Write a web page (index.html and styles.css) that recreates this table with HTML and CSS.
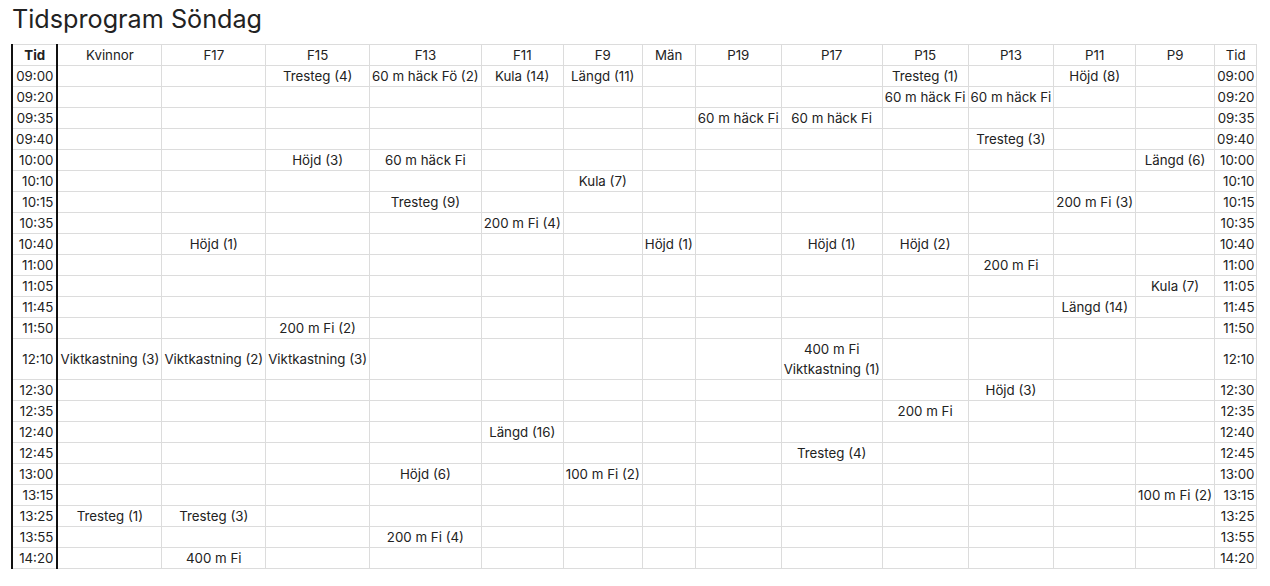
FILE: index.html
```html
<!DOCTYPE html>
<html lang="sv">
<head>
<meta charset="utf-8">
<title>Tidsprogram Söndag</title>
<link rel="stylesheet" href="styles.css">
</head>
<body>
<h1 class="title">Tidsprogram Söndag</h1>
<table class="schedule">
<thead>
<tr><th class="time-head">Tid</th><th>Kvinnor</th><th>F17</th><th>F15</th><th>F13</th><th>F11</th><th>F9</th><th>Män</th><th>P19</th><th>P17</th><th>P15</th><th>P13</th><th>P11</th><th>P9</th><th class="end-head">Tid</th></tr>
</thead>
<tbody>
<tr><td class="time">09:00</td><td></td><td></td><td>Tresteg (4)</td><td>60 m häck Fö (2)</td><td>Kula (14)</td><td>Längd (11)</td><td></td><td></td><td></td><td>Tresteg (1)</td><td></td><td>Höjd (8)</td><td></td><td class="end">09:00</td></tr>
<tr><td class="time">09:20</td><td></td><td></td><td></td><td></td><td></td><td></td><td></td><td></td><td></td><td>60 m häck Fi</td><td>60 m häck Fi</td><td></td><td></td><td class="end">09:20</td></tr>
<tr><td class="time">09:35</td><td></td><td></td><td></td><td></td><td></td><td></td><td></td><td>60 m häck Fi</td><td>60 m häck Fi</td><td></td><td></td><td></td><td></td><td class="end">09:35</td></tr>
<tr><td class="time">09:40</td><td></td><td></td><td></td><td></td><td></td><td></td><td></td><td></td><td></td><td></td><td>Tresteg (3)</td><td></td><td></td><td class="end">09:40</td></tr>
<tr><td class="time">10:00</td><td></td><td></td><td>Höjd (3)</td><td>60 m häck Fi</td><td></td><td></td><td></td><td></td><td></td><td></td><td></td><td></td><td>Längd (6)</td><td class="end">10:00</td></tr>
<tr><td class="time">10:10</td><td></td><td></td><td></td><td></td><td></td><td>Kula (7)</td><td></td><td></td><td></td><td></td><td></td><td></td><td></td><td class="end">10:10</td></tr>
<tr><td class="time">10:15</td><td></td><td></td><td></td><td>Tresteg (9)</td><td></td><td></td><td></td><td></td><td></td><td></td><td></td><td>200 m Fi (3)</td><td></td><td class="end">10:15</td></tr>
<tr><td class="time">10:35</td><td></td><td></td><td></td><td></td><td>200 m Fi (4)</td><td></td><td></td><td></td><td></td><td></td><td></td><td></td><td></td><td class="end">10:35</td></tr>
<tr><td class="time">10:40</td><td></td><td>Höjd (1)</td><td></td><td></td><td></td><td></td><td>Höjd (1)</td><td></td><td>Höjd (1)</td><td>Höjd (2)</td><td></td><td></td><td></td><td class="end">10:40</td></tr>
<tr><td class="time">11:00</td><td></td><td></td><td></td><td></td><td></td><td></td><td></td><td></td><td></td><td></td><td>200 m Fi</td><td></td><td></td><td class="end">11:00</td></tr>
<tr><td class="time">11:05</td><td></td><td></td><td></td><td></td><td></td><td></td><td></td><td></td><td></td><td></td><td></td><td></td><td>Kula (7)</td><td class="end">11:05</td></tr>
<tr><td class="time">11:45</td><td></td><td></td><td></td><td></td><td></td><td></td><td></td><td></td><td></td><td></td><td></td><td>Längd (14)</td><td></td><td class="end">11:45</td></tr>
<tr><td class="time">11:50</td><td></td><td></td><td>200 m Fi (2)</td><td></td><td></td><td></td><td></td><td></td><td></td><td></td><td></td><td></td><td></td><td class="end">11:50</td></tr>
<tr><td class="time">12:10</td><td>Viktkastning (3)</td><td>Viktkastning (2)</td><td>Viktkastning (3)</td><td></td><td></td><td></td><td></td><td></td><td>400 m Fi<br>Viktkastning (1)</td><td></td><td></td><td></td><td></td><td class="end">12:10</td></tr>
<tr><td class="time">12:30</td><td></td><td></td><td></td><td></td><td></td><td></td><td></td><td></td><td></td><td></td><td>Höjd (3)</td><td></td><td></td><td class="end">12:30</td></tr>
<tr><td class="time">12:35</td><td></td><td></td><td></td><td></td><td></td><td></td><td></td><td></td><td></td><td>200 m Fi</td><td></td><td></td><td></td><td class="end">12:35</td></tr>
<tr><td class="time">12:40</td><td></td><td></td><td></td><td></td><td>Längd (16)</td><td></td><td></td><td></td><td></td><td></td><td></td><td></td><td></td><td class="end">12:40</td></tr>
<tr><td class="time">12:45</td><td></td><td></td><td></td><td></td><td></td><td></td><td></td><td></td><td>Tresteg (4)</td><td></td><td></td><td></td><td></td><td class="end">12:45</td></tr>
<tr><td class="time">13:00</td><td></td><td></td><td></td><td>Höjd (6)</td><td></td><td>100 m Fi (2)</td><td></td><td></td><td></td><td></td><td></td><td></td><td></td><td class="end">13:00</td></tr>
<tr><td class="time">13:15</td><td></td><td></td><td></td><td></td><td></td><td></td><td></td><td></td><td></td><td></td><td></td><td></td><td>100 m Fi (2)</td><td class="end">13:15</td></tr>
<tr><td class="time">13:25</td><td>Tresteg (1)</td><td>Tresteg (3)</td><td></td><td></td><td></td><td></td><td></td><td></td><td></td><td></td><td></td><td></td><td></td><td class="end">13:25</td></tr>
<tr><td class="time">13:55</td><td></td><td></td><td></td><td>200 m Fi (4)</td><td></td><td></td><td></td><td></td><td></td><td></td><td></td><td></td><td></td><td class="end">13:55</td></tr>
<tr><td class="time">14:20</td><td></td><td>400 m Fi</td><td></td><td></td><td></td><td></td><td></td><td></td><td></td><td></td><td></td><td></td><td></td><td class="end">14:20</td></tr>
</tbody>
</table>
</body>
</html>
```
FILE: styles.css
```css
body {
  margin: 0;
  padding: 5px 11px 10px;
  font-family: Inter, "Noto Sans", sans-serif;
  color: #222;
  background: #fff;
}
.title {
  margin: 0 0 10px 1px;
  font-size: 25.2px;
  line-height: 29px;
  font-weight: 400;
  color: #222;
}
.schedule {
  border-collapse: collapse;
  font-size: 13.3px;
  line-height: 20px;
}
.schedule th,
.schedule td {
  border: 1px solid #dcdcdc;
  padding: 0 2px;
  text-align: center;
  vertical-align: middle;
  white-space: nowrap;
  font-weight: 400;
}
.schedule .time-head {
  font-weight: 700;
  border-left: 2px solid #111;
  border-right: 2px solid #111;
}
.schedule .time {
  text-align: right;
  padding: 0 3px;
  border-left: 2px solid #111;
  border-right: 2px solid #111;
}
.schedule .end {
  text-align: right;
}
```
